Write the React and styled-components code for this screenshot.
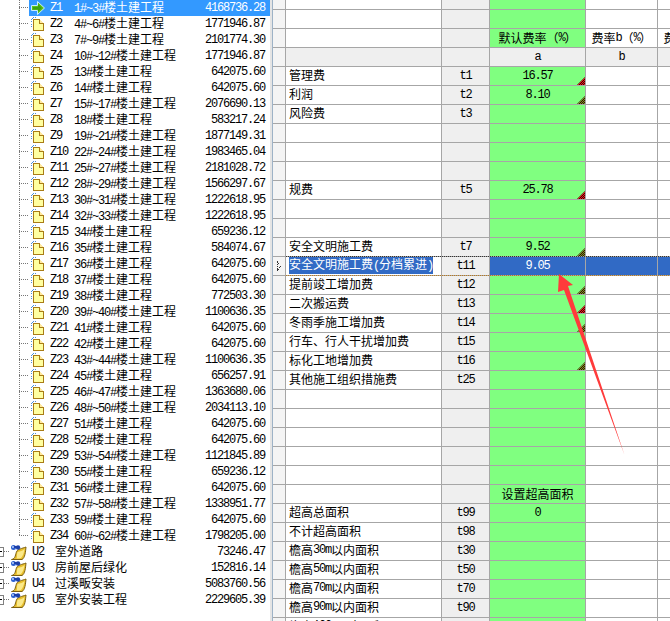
import React from "react";
import styled, { createGlobalStyle } from "styled-components";

const Global = createGlobalStyle`
  html, body { margin: 0; padding: 0; background: #fff; }
  body { font: 12px/16px "Liberation Mono", "Noto Sans CJK SC", monospace; letter-spacing: -1.2px; color: #000; }
`;

const Page = styled.div`
  position: relative;
  display: flex;
  width: 670px;
  height: 621px;
  overflow: hidden;
  background: #fff;
`;

const TreePane = styled.div`
  width: 270px;
  flex: none;
`;

const TreeRow = styled.div`
  display: flex;
  height: 16px;
  align-items: stretch;
  padding-left: ${p => (p.$child ? "19px" : "0")};
`;

const Connector = styled.span`
  width: 10px;
  flex: none;
  background-image:
    repeating-linear-gradient(to bottom, #777 0 1px, transparent 1px 2px),
    repeating-linear-gradient(to right, #777 0 1px, transparent 1px 2px);
  background-repeat: no-repeat;
  background-position: 0 0, 0 7px;
  background-size: 1px ${p => (p.$last ? "8px" : "16px")}, 10px 1px;
`;

const Item = styled.div`
  flex: 1;
  display: flex;
  align-items: center;
  min-width: 0;
  padding: 0 5px 0 ${p => (p.$top ? "0" : "2px")};
  background: ${p => (p.$active ? "#3399ff" : "transparent")};
  color: ${p => (p.$active ? "#fff" : "#000")};
`;

const IconSlot = styled.span`
  display: flex;
  flex: none;
  width: ${p => (p.$top ? "22px" : "19px")};
`;

const Code = styled.span`
  flex: none;
  width: ${p => (p.$top ? "23px" : "24px")};
`;

const Name = styled.span`
  flex: 1;
  white-space: nowrap;
`;

const Amount = styled.span`
  flex: none;
  text-align: right;
`;

const Han = styled.span`
  font-family: "Noto Sans CJK SC", sans-serif;
  font-size: 12px;
  letter-spacing: 0;
`;

const Expander = styled.span`
  flex: none;
  position: relative;
  align-self: center;
  width: 3px;
  height: 8px;
  margin-bottom: 1px;
  border: 1px solid #808080;
  border-left: 0;
  &::after {
    content: "";
    position: absolute;
    left: 0;
    top: 3px;
    width: 2px;
    height: 1px;
    background: #000;
  }
`;

const Dots = styled.span`
  flex: none;
  width: 6px;
  align-self: center;
  height: 1px;
  margin-bottom: 1px;
  background: repeating-linear-gradient(to right, #777 0 1px, transparent 1px 2px);
`;

const Splitter = styled.div`
  width: 3px;
  flex: none;
  background: #e4e4e4;
  border-right: 1px solid #9db2c6;
  box-sizing: border-box;
`;

const Sheet = styled.div`
  flex: 1;
  min-width: 0;
  overflow: hidden;
`;

const Row = styled.div`
  display: flex;
  height: ${p => p.$h || 19}px;
  box-sizing: border-box;
  width: 410px;
  border-bottom: 1px solid #a6a6a6;
  position: relative;
`;

const Cell = styled.div`
  flex: none;
  box-sizing: border-box;
  position: relative;
  width: ${p => p.$w}px;
  border-right: 1px solid #a6a6a6;
  background: ${p => p.$bg || "#fff"};
  color: ${p => p.$color || "#000"};
  display: flex;
  align-items: center;
  justify-content: ${p => (p.$left ? "flex-start" : "center")};
  padding: 0 0 ${p => (p.$left ? "2px" : "1px")} ${p => (p.$left ? "3px" : "0")};
  white-space: nowrap;
  overflow: hidden;
`;

const Picked = styled.span`
  background: #316ac5;
  color: #fff;
`;

const Marker = styled.i`
  position: absolute;
  right: 0;
  bottom: 0;
  width: 8px;
  height: 8px;
  clip-path: polygon(100% 0, 100% 100%, 0 100%);
  background: repeating-conic-gradient(#400 0 25%, ${p => p.$c} 0 50%) 0 0 / 2px 2px;
`;

const Focus = styled.div`
  position: absolute;
  left: 13px;
  right: 0;
  top: -1px;
  bottom: -1px;
  border-top: 1px dotted #333;
  border-bottom: 1px dotted #b97a20;
  pointer-events: none;
`;

const Callout = styled.svg`
  position: absolute;
  left: 0;
  top: 0;
  pointer-events: none;
`;

const split = t =>
  t.split(/([\u3000-\u9fff\uff00-\uffef]+)/).map((s, i) =>
    i % 2 ? <Han key={i}>{s}</Han> : s
  );

const DocIcon = () => (
  <svg width="15" height="16" viewBox="0 0 15 16" shapeRendering="crispEdges">
    <path d="M0.5 6V2.5h1v-1h3" fill="none" stroke="#4a90d9" strokeDasharray="1 1" />
    <path d="M0.5 8v4" fill="none" stroke="#4a90d9" strokeDasharray="1 1" />
    <path d="M2.5 3.5h6l4 4v7h-10z" fill="#ffffa0" stroke="#a97c16" />
    <path d="M8.5 3.5v4h4" fill="#ffe9a0" stroke="#a97c16" />
  </svg>
);

const GoIcon = () => (
  <svg width="15" height="16" viewBox="0 0 15 16">
    <path d="M0.5 5.5h6V1.5l7 6.5-7 6.500v-4h-6z" fill="#5cc41c" stroke="#c9ecff" />
    <path d="M2 7h5V4l4 4-4 4v-2.500H2z" fill="#3da010" />
  </svg>
);

const NoteIcon = () => (
  <svg width="17" height="16" viewBox="0 0 17 16">
    <path d="M1.500 15.500C6 15 5 10 7 7c1-2 5-2.500 9-4-.5 5-1 11-4 12.500z" fill="#e8bf2c" stroke="#7d6010" strokeWidth="1" />
    <path d="M7.500 8c3-.5 5-1 7-3-.5 4-1.500 7-3.500 9-2 .5-3.500 .8-4.500 .5C7.500 13 6.500 11 7.500 8z" fill="#fbe98a" />
    <circle cx="3.500" cy="3.500" r="2.500" fill="#2a5fd0" />
    <circle cx="8" cy="3.500" r="2.200" fill="#1c3fa8" />
    <path d="M3 3h5" stroke="#1c3fa8" strokeWidth="2" />
    <circle cx="3" cy="3" r="1" fill="#bcd6ff" />
  </svg>
);

const GutterMark = () => (
  <svg width="6" height="10" viewBox="0 0 6 10" shapeRendering="crispEdges">
    <path d="M1 .5v9M1 .5l4 4.500-4 4.500" fill="none" stroke="#333" strokeDasharray="1 1" />
  </svg>
);

const zRows = [
  ["Z1", "1#~3#", "4168736.28"], ["Z2", "4#~6#", "1771946.87"], ["Z3", "7#~9#", "2101774.30"],
  ["Z4", "10#~12#", "1771946.87"], ["Z5", "13#", "642075.60"], ["Z6", "14#", "642075.60"],
  ["Z7", "15#~17#", "2076690.13"], ["Z8", "18#", "583217.24"], ["Z9", "19#~21#", "1877149.31"],
  ["Z10", "22#~24#", "1983465.04"], ["Z11", "25#~27#", "2181028.72"], ["Z12", "28#~29#", "1566297.67"],
  ["Z13", "30#~31#", "1222618.95"], ["Z14", "32#~33#", "1222618.95"], ["Z15", "34#", "659236.12"],
  ["Z16", "35#", "584074.67"], ["Z17", "36#", "642075.60"], ["Z18", "37#", "642075.60"],
  ["Z19", "38#", "772503.30"], ["Z20", "39#~40#", "1100636.35"], ["Z21", "41#", "642075.60"],
  ["Z22", "42#", "642075.60"], ["Z23", "43#~44#", "1100636.35"], ["Z24", "45#", "656257.91"],
  ["Z25", "46#~47#", "1363680.06"], ["Z26", "48#~50#", "2034113.10"], ["Z27", "51#", "642075.60"],
  ["Z28", "52#", "642075.60"], ["Z29", "53#~54#", "1121845.89"], ["Z30", "55#", "659236.12"],
  ["Z31", "56#", "642075.60"], ["Z32", "57#~58#", "1338951.77"], ["Z33", "59#", "642075.60"],
  ["Z34", "60#~62#", "1798205.00"],
];

const uRows = [
  ["U2", "室外道路", "73246.47"], ["U3", "房前屋后绿化", "152816.14"],
  ["U4", "过溪畈安装", "5083760.56"], ["U5", "室外安装工程", "2229605.39"],
];

const RED = "#e82020";
const OLIVE = "#6aa828";

const blank = {};
const sheetRows = [
  { h: 10 }, blank,
  { a: "默认费率（%）", b: "费率b（%）", c: "费率c（%）" },
  { head: true, a: "a", b: "b", c: "c" },
  { n: "管理费", t: "t1", a: "16.57", m: RED },
  { n: "利润", t: "t2", a: "8.10", m: OLIVE },
  { n: "风险费", t: "t3" },
  blank, blank, blank,
  { n: "规费", t: "t5", a: "25.78", m: RED },
  blank, blank,
  { n: "安全文明施工费", t: "t7", a: "9.52", m: OLIVE },
  { n: "安全文明施工费(分档累进)", t: "t11", a: "9.05", sel: true },
  { n: "提前竣工增加费", t: "t12", m: OLIVE },
  { n: "二次搬运费", t: "t13", m: RED },
  { n: "冬雨季施工增加费", t: "t14", m: OLIVE },
  { n: "行车、行人干扰增加费", t: "t15" },
  { n: "标化工地增加费", t: "t16", m: OLIVE },
  { n: "其他施工组织措施费", t: "t25" },
  blank, blank, blank, blank, blank,
  { a: "设置超高面积" },
  { n: "超高总面积", t: "t99", a: "0" },
  { n: "不计超高面积", t: "t98" },
  { n: "檐高30m以内面积", t: "t30" },
  { n: "檐高50m以内面积", t: "t50" },
  { n: "檐高70m以内面积", t: "t70" },
  { n: "檐高90m以内面积", t: "t90" },
  { n: "檐高100m以内面积" },
];

const GRAY = "#efefef";
const GREEN = "#80ff80";
const BLUE = "#316ac5";

export default function App() {
  return (
    <Page>
      <Global />
      <TreePane>
        {zRows.map(([code, no, amount], i) => (
          <TreeRow $child key={code}>
            <Connector $last={i === zRows.length - 1} />
            <Item $active={i === 0}>
              <IconSlot>{i === 0 ? <GoIcon /> : <DocIcon />}</IconSlot>
              <Code>{code}</Code>
              <Name>{no}<Han>楼土建工程</Han></Name>
              <Amount>{amount}</Amount>
            </Item>
          </TreeRow>
        ))}
        {uRows.map(([code, name, amount]) => (
          <TreeRow key={code}>
            <Expander />
            <Dots />
            <Item $top>
              <IconSlot $top><NoteIcon /></IconSlot>
              <Code $top>{code}</Code>
              <Name><Han>{name}</Han></Name>
              <Amount>{amount}</Amount>
            </Item>
          </TreeRow>
        ))}
      </TreePane>
      <Splitter />
      <Sheet>
        {sheetRows.map((r, i) => (
          <Row key={i} $h={r.h}>
            <Cell $w={13} $bg="#f4f4f4">{r.sel && <GutterMark />}</Cell>
            <Cell $w={156} $left $bg={r.head ? GRAY : "#fff"}>
              {r.n && (r.sel ? <Picked>{split(r.n)}</Picked> : split(r.n))}
            </Cell>
            <Cell $w={48} $bg={GRAY}>{r.t}</Cell>
            <Cell $w={96} $bg={r.sel ? BLUE : r.head ? GRAY : GREEN} $color={r.sel ? "#fff" : "#000"}>
              {r.a && split(r.a)}
              {r.m && <Marker $c={r.m} />}
            </Cell>
            <Cell $w={72} $bg={r.sel ? BLUE : r.head ? GRAY : "#fff"}>{r.b && split(r.b)}</Cell>
            <Cell $w={72} $bg={r.sel ? BLUE : r.head ? GRAY : "#fff"}>{r.c && split(r.c)}</Cell>
            {r.sel && <Focus />}
          </Row>
        ))}
      </Sheet>
      <Callout width="670" height="621" viewBox="0 0 670 621">
        <polygon points="559,274 573,285 568,286 624.500,455 564,290 558,292" fill="#ff3b3b" />
      </Callout>
    </Page>
  );
}
